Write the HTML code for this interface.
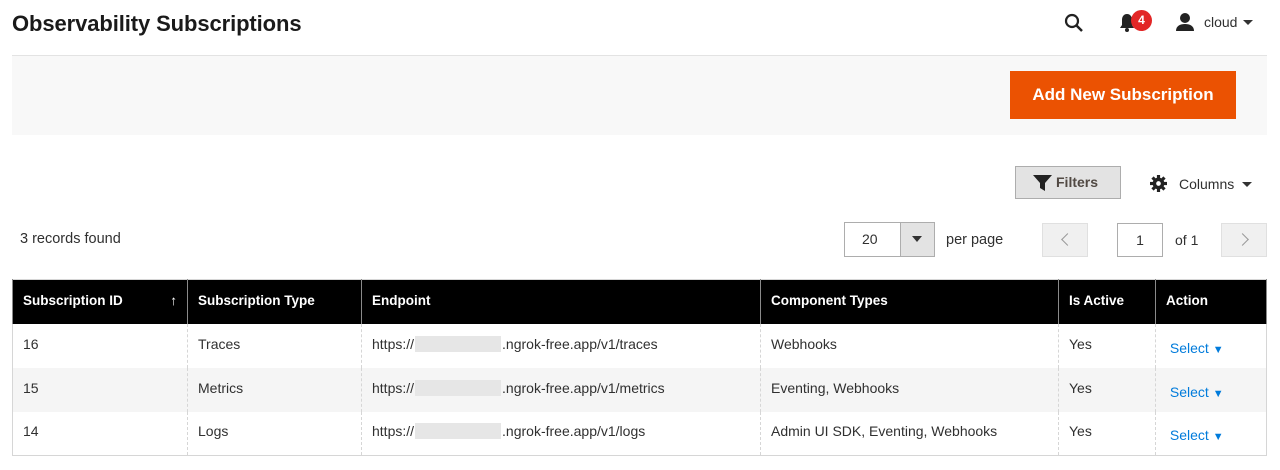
<!DOCTYPE html>
<html><head><style>
*{box-sizing:border-box;margin:0;padding:0}
body{width:1280px;height:470px;background:#fff;font-family:"Liberation Sans",sans-serif;color:#303030;position:relative;overflow:hidden;font-size:14px}
.a{position:absolute}
h1{position:absolute;left:12px;top:11px;font-size:22px;font-weight:bold;color:#1a1a1a;letter-spacing:-0.1px}
table{position:absolute;left:12px;top:279px;width:1255px;border-collapse:collapse;font-size:14px}
th{background:#000;color:#fff;text-align:left;font-weight:bold;height:44px;padding:0 10px 2px;border-left:1px solid #8a8a8a;border-right:1px solid #8a8a8a;font-size:13.5px}
td{height:44px;padding:0 10px 4px;border-left:1px dashed #d6d6d6;border-right:1px dashed #d6d6d6;vertical-align:middle}
tr.alt td{background:#f5f5f5}
table{border:1px solid #d6d6d6}
.blur{display:inline-block;width:86px;height:16px;background:#e6e6e6;vertical-align:-3px;margin:0 1px}
.sel{color:#007bdb;padding-top:4px;padding-bottom:0}
.chev{position:absolute;width:9px;height:9px;border-left:1.5px solid #999;border-bottom:1.5px solid #999}
</style></head><body>
<h1>Observability Subscriptions</h1>
<svg class="a" style="left:1064px;top:13px" width="20" height="20" viewBox="0 0 20 20"><circle cx="8" cy="8" r="6" fill="none" stroke="#222" stroke-width="2.2"/><path d="M12.5 12.5 L18 18" stroke="#222" stroke-width="2.5"/></svg>
<svg class="a" style="left:1118px;top:13px" width="18" height="20" viewBox="0 0 18 20"><path d="M9 1c-3.5 0-5 3-5 6v5l-2 3h14l-2-3V7c0-3-1.5-6-5-6z" fill="#222"/><circle cx="9" cy="17" r="2" fill="#222"/></svg>
<div class="a" style="left:1131px;top:10px;width:21px;height:21px;border-radius:50%;background:#e22626;color:#fff;font-size:12px;font-weight:bold;text-align:center;line-height:21px">4</div>
<svg class="a" style="left:1175px;top:12px" width="20" height="20" viewBox="0 0 20 20"><circle cx="10" cy="6" r="5" fill="#222"/><path d="M1 19c0-5 4-7 9-7s9 2 9 7z" fill="#222"/></svg>
<div class="a" style="left:1204px;top:14px;font-size:14px;color:#303030">cloud</div>
<div class="a" style="left:1243px;top:20px;border:5px solid transparent;border-top:5px solid #333"></div>
<div class="a" style="left:12px;top:55px;width:1255px;height:1px;background:#e3e3e3"></div>
<div class="a" style="left:12px;top:56px;width:1255px;height:79px;background:#f8f8f8"></div>
<div class="a" style="left:1010px;top:71px;width:226px;height:48px;background:#eb5202;color:#fff;font-weight:bold;font-size:17px;text-align:center;line-height:48px">Add New Subscription</div>
<div class="a" style="left:1015px;top:166px;width:106px;height:33px;background:#e3e3e3;border:1px solid #adadad;font-weight:bold;color:#514943;font-size:14px;line-height:31px;padding-left:40px">Filters</div>
<svg class="a" style="left:1033px;top:175px" width="20" height="16" viewBox="0 0 20 16"><path d="M0 0h19l-7 8v8l-5-3V8z" fill="#222"/></svg>
<svg class="a" style="left:1150px;top:175px" width="17" height="17" viewBox="0 0 16 16"><g fill="#222"><rect x="6.5" y="0" width="3" height="16"/><rect x="0" y="6.5" width="16" height="3"/><rect x="6.5" y="0" width="3" height="16" transform="rotate(45 8 8)"/><rect x="6.5" y="0" width="3" height="16" transform="rotate(-45 8 8)"/><circle cx="8" cy="8" r="5.5"/></g><circle cx="8" cy="8" r="2.2" fill="#fff"/></svg>
<div class="a" style="left:1179px;top:176px;font-size:14px">Columns</div>
<div class="a" style="left:1242px;top:182px;border:5px solid transparent;border-top:5px solid #333"></div>
<div class="a" style="left:20px;top:231px;font-size:14.5px">3 records found</div>
<div class="a" style="left:844px;top:222px;width:91px;height:35px;border:1px solid #adadad;background:#fff"></div>
<div class="a" style="left:862px;top:231px;font-size:14px">20</div>
<div class="a" style="left:900px;top:223px;width:34px;height:33px;background:#e3e3e3;border-left:1px solid #adadad"></div>
<div class="a" style="left:912px;top:236px;border:5px solid transparent;border-top:6px solid #333"></div>
<div class="a" style="left:946px;top:232px;font-size:14.5px">per page</div>
<div class="a" style="left:1042px;top:223px;width:46px;height:34px;background:#f0f0f0;border:1px solid #e0e0e0"></div>
<div class="chev" style="left:1063px;top:235px;transform:rotate(45deg)"></div>
<div class="a" style="left:1117px;top:223px;width:46px;height:34px;border:1px solid #adadad;text-align:center;line-height:32px">1</div>
<div class="a" style="left:1175px;top:232px">of 1</div>
<div class="a" style="left:1221px;top:223px;width:46px;height:34px;background:#f0f0f0;border:1px solid #e0e0e0"></div>
<div class="chev" style="left:1238px;top:235px;transform:rotate(-135deg)"></div>
<table>
<tr><th style="width:175px">Subscription ID<span style="float:right;font-weight:normal">&#8593;</span></th><th style="width:174px">Subscription Type</th><th style="width:399px">Endpoint</th><th style="width:298px">Component Types</th><th style="width:97px">Is Active</th><th>Action</th></tr>
<tr><td>16</td><td>Traces</td><td>https://<span class="blur"></span>.ngrok-free.app/v1/traces</td><td>Webhooks</td><td>Yes</td><td class="sel">&nbsp;Select <span style="font-size:11px">&#9660;</span></td></tr>
<tr class="alt"><td>15</td><td>Metrics</td><td>https://<span class="blur"></span>.ngrok-free.app/v1/metrics</td><td>Eventing, Webhooks</td><td>Yes</td><td class="sel">&nbsp;Select <span style="font-size:11px">&#9660;</span></td></tr>
<tr><td>14</td><td>Logs</td><td>https://<span class="blur"></span>.ngrok-free.app/v1/logs</td><td>Admin UI SDK, Eventing, Webhooks</td><td>Yes</td><td class="sel">&nbsp;Select <span style="font-size:11px">&#9660;</span></td></tr>
</table>
</body></html>
